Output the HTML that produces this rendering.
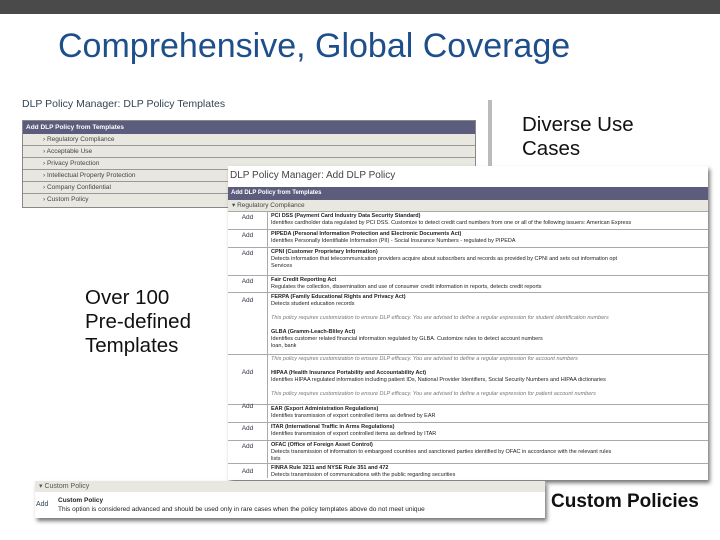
<!DOCTYPE html>
<html><head><style>
*{margin:0;padding:0;box-sizing:border-box}
body{width:720px;height:540px;background:#fff;position:relative;overflow:hidden;font-family:"Liberation Sans",sans-serif}
.abs{position:absolute}
.row1{position:absolute;left:0;width:100%;height:12px;border-bottom:1px solid #999;background:#e8e8e0;font-size:6.5px;color:#444;padding-left:20px;line-height:12px}
.hdr{background:#5c5c7c;color:#fff;font-size:6.5px;font-weight:bold;line-height:13px;padding-left:3px}
.r{position:absolute;left:0;right:0;border-bottom:1px solid #aaa;}
.r .a{position:absolute;left:0;width:39px;text-align:center;font-size:6.5px;color:#334;top:2px}
.r .t{position:absolute;left:43px;right:0;top:1px;font-size:5.5px;line-height:7px;color:#222;white-space:nowrap;overflow:hidden}
.r .t b{font-size:5.5px}
.big{font-size:20.5px;color:#111;line-height:24px}
</style></head><body>
<div class="abs" style="left:0;top:0;width:720px;height:14px;background:#4a4a4a"></div>
<div class="abs" style="left:58px;top:27px;font-size:34px;color:#1e4f8a;white-space:nowrap">Comprehensive, Global Coverage</div>

<!-- panel 1 -->
<div class="abs" style="left:488px;top:100px;width:4px;height:70px;background:#bbb"></div>
<div class="abs" style="left:22px;top:98px;font-size:10.5px;color:#345">DLP Policy Manager: DLP Policy Templates</div>
<div class="abs" style="left:22px;top:120px;width:454px;height:88px;border:1px solid #888;background:#e8e8e0">
 <div class="hdr" style="height:13px">Add DLP Policy from Templates</div>
 <div class="row1" style="top:13px">› Regulatory Compliance</div>
 <div class="row1" style="top:25px">› Acceptable Use</div>
 <div class="row1" style="top:37px">› Privacy Protection</div>
 <div class="row1" style="top:49px">› Intellectual Property Protection</div>
 <div class="row1" style="top:61px">› Company Confidential</div>
 <div class="row1" style="top:73px;border:none">› Custom Policy</div>
</div>

<div class="abs big" style="left:522px;top:113px">Diverse Use<br>Cases</div>

<!-- panel 2 -->
<div class="abs" style="left:228px;top:166px;width:480px;height:314px;background:#fff;box-shadow:2px 3px 4px #777">
 <div class="abs" style="left:2px;top:4px;font-size:10px;color:#444">DLP Policy Manager: Add DLP Policy</div>
 <div class="abs hdr" style="left:0;right:0;top:21px;height:13px;line-height:13px;font-size:6px">Add DLP Policy from Templates</div>
 <div class="abs" style="left:0;right:0;top:34px;height:12px;background:#e8e8e0;border-bottom:1px solid #aaa;font-size:6.5px;line-height:12px;padding-left:4px;color:#444">▾ Regulatory Compliance</div>
 <div class="abs" style="left:39px;top:46px;width:1px;height:266px;background:#aaa"></div>
 <div class="abs" style="left:0;right:0;top:46px;height:266px">
  <div class="r" style="top:0;height:18px"><span class="a">Add</span><div class="t"><b>PCI DSS (Payment Card Industry Data Security Standard)</b><br>Identifies cardholder data regulated by PCI DSS. Customize to detect credit card numbers from one or all of the following issuers: American Express</div></div>
  <div class="r" style="top:18px;height:18px"><span class="a">Add</span><div class="t"><b>PIPEDA (Personal Information Protection and Electronic Documents Act)</b><br>Identifies Personally Identifiable Information (PII) - Social Insurance Numbers - regulated by PIPEDA</div></div>
  <div class="r" style="top:36px;height:28px"><span class="a">Add</span><div class="t"><b>CPNI (Customer Proprietary Information)</b><br>Detects information that telecommunication providers acquire about subscribers and records as provided by CPNI and sets out information opt<br>Services</div></div>
  <div class="r" style="top:64px;height:17px"><span class="a">Add</span><div class="t"><b>Fair Credit Reporting Act</b><br>Regulates the collection, dissemination and use of consumer credit information in reports, detects credit reports</div></div>
  <div class="r" style="top:81px;height:62px"><span class="a" style="top:4px">Add</span><div class="t"><b>FERPA (Family Educational Rights and Privacy Act)</b><br>Detects student education records<br><br><i style="color:#777">This policy requires customization to ensure DLP efficacy. You are advised to define a regular expression for student identification numbers</i><br><br><b>GLBA (Gramm-Leach-Bliley Act)</b><br>Identifies customer related financial information regulated by GLBA. Customize rules to detect account numbers<br>loan, bank</div></div>
  <div class="r" style="top:143px;height:50px"><span class="a" style="top:14px">Add</span><div class="t"><i style="color:#777">This policy requires customization to ensure DLP efficacy. You are advised to define a regular expression for account numbers</i><br><br><b>HIPAA (Health Insurance Portability and Accountability Act)</b><br>Identifies HIPAA regulated information including patient IDs, National Provider Identifiers, Social Security Numbers and HIPAA dictionaries<br><br><i style="color:#777">This policy requires customization to ensure DLP efficacy. You are advised to define a regular expression for patient account numbers</i></div></div>
  <div class="r" style="top:193px;height:18px"><span class="a" style="top:-2px">Add</span><div class="t"><b>EAR (Export Administration Regulations)</b><br>Identifies transmission of export controlled items as defined by EAR</div></div>
  <div class="r" style="top:211px;height:18px"><span class="a">Add</span><div class="t"><b>ITAR (International Traffic in Arms Regulations)</b><br>Identifies transmission of export controlled items as defined by ITAR</div></div>
  <div class="r" style="top:229px;height:23px"><span class="a">Add</span><div class="t"><b>OFAC (Office of Foreign Asset Control)</b><br>Detects transmission of information to embargoed countries and sanctioned parties identified by OFAC in accordance with the relevant rules<br>lists</div></div>
  <div class="r" style="top:252px;height:14px;border:none"><span class="a" style="top:4px">Add</span><div class="t"><b>FINRA Rule 3211 and NYSE Rule 351 and 472</b><br>Detects transmission of communications with the public regarding securities</div></div>
 </div>
</div>

<div class="abs big" style="left:85px;top:286px">Over 100<br>Pre-defined<br>Templates</div>

<!-- custom panel -->
<div class="abs" style="left:35px;top:481px;width:510px;height:37px;background:#fff;box-shadow:2px 3px 4px #777">
 <div style="height:11px;background:#e8e8e0;font-size:7px;color:#555;line-height:11px;padding-left:4px">▾ Custom Policy</div>
 <div class="abs" style="left:1px;top:20px;font-size:7px;color:#345">Add</div>
 <div class="abs" style="left:23px;top:15px;font-size:6.5px;line-height:9px;color:#222;white-space:nowrap"><b>Custom Policy</b><br>This option is considered advanced and should be used only in rare cases when the policy templates above do not meet unique</div>
</div>
<div class="abs" style="left:551px;top:491px;font-size:19px;font-weight:bold;color:#111;white-space:nowrap">Custom Policies</div>
</body></html>
